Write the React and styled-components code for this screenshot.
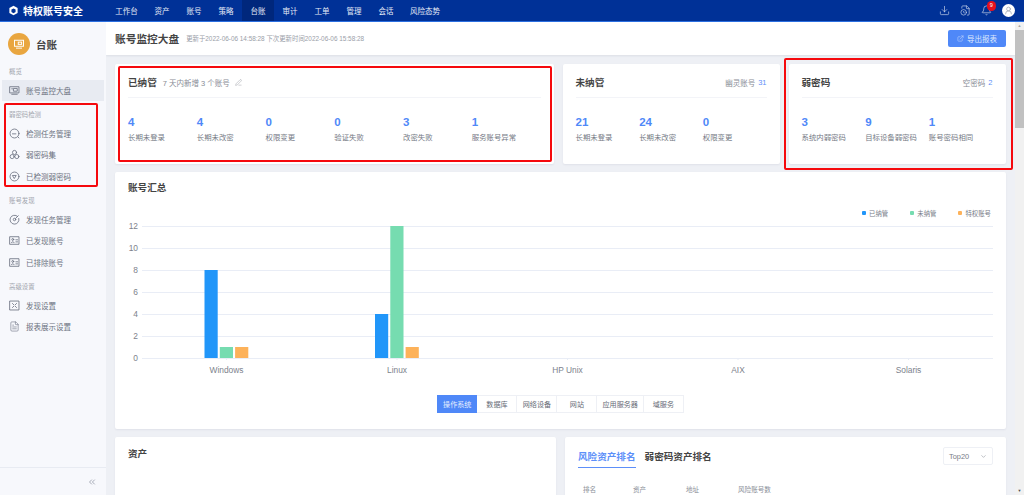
import styled, { createGlobalStyle } from 'styled-components';
import { Download, FileClock, Bell, UserRound, PenLine, FileText, ExternalLink, ChevronsLeft, ChevronDown } from 'lucide-react';

const GlobalStyle = createGlobalStyle`
  html, body {
    margin: 0;
    padding: 0;
    height: 495px;
    overflow: hidden;
    background: #eef0f5;
    font-family: "Liberation Sans", "Noto Sans CJK SC", sans-serif;
    color: #333;
  }
  * { box-sizing: border-box; }
`;

const Page = styled.div`
  width: 1024px;
  height: 495px;
  display: flex;
  flex-direction: column;
  overflow: hidden;
`;

const TopBar = styled.header`
  height: 22px;
  flex: none;
  display: flex;
  align-items: stretch;
  background: #003197;
  border-bottom: 1px solid #2b6fe0;
  color: #e4eaf6;
`;
const Brand = styled.div`
  width: 107px;
  display: flex;
  align-items: center;
  gap: 4px;
  padding-left: 8px;
  font-size: 10px;
  font-weight: 700;
  color: #fff;
`;
const Nav = styled.nav`
  display: flex;
  flex: 1;
`;
const NavItem = styled.div`
  display: flex;
  align-items: center;
  justify-content: center;
  padding: 0 8px;
  width: ${({ $w }) => $w || 32}px;
  font-size: 7.5px;
  margin-bottom: -1px;
  background: ${({ $active }) => ($active ? '#00277c' : 'transparent')};
  border-bottom: 1px solid ${({ $active }) => ($active ? '#2b6fe0' : 'transparent')};
`;
const TopIcons = styled.div`
  display: flex;
  align-items: center;
  gap: 10px;
  padding-right: 9px;
`;
const BellWrap = styled.div`
  position: relative;
  display: flex;
`;
const Badge = styled.span`
  position: absolute;
  top: -4px;
  right: -4px;
  width: 9.5px;
  height: 9.5px;
  border-radius: 50%;
  background: #e5101e;
  color: #fff;
  font-size: 5.5px;
  line-height: 9.5px;
  text-align: center;
`;
const Avatar = styled.div`
  width: 13px;
  height: 13px;
  border-radius: 50%;
  background: #fff;
  color: #8b93a3;
  display: flex;
  align-items: center;
  justify-content: center;
`;

const Body = styled.div`
  flex: 1;
  display: flex;
  min-height: 0;
`;

const Sidebar = styled.aside`
  width: 106px;
  flex: none;
  display: flex;
  flex-direction: column;
  background: #f7f8fc;
`;
const SideHead = styled.div`
  display: flex;
  align-items: center;
  gap: 6px;
  padding: 11px 0 0 8px;
  font-size: 10.5px;
  font-weight: 700;
  color: #444;
`;
const SideLogo = styled.div`
  width: 22px;
  height: 22px;
  border-radius: 50%;
  background: #e9a640;
  display: flex;
  align-items: center;
  justify-content: center;
`;
const SideMenu = styled.div`
  flex: 1;
  display: flex;
  flex-direction: column;
  gap: 8.5px;
  padding-top: 11.5px;
`;
const SideGroup = styled.div`
  position: relative;
  &::after {
    content: ${({ $marked }) => ($marked ? '""' : 'none')};
    position: absolute;
    top: -7px;
    bottom: 0;
    left: 4px;
    right: 8px;
    border: 2px solid #f5090d;
    border-radius: 2px;
  }
`;
const SideLabel = styled.div`
  height: 10px;
  line-height: 10px;
  margin-bottom: 3px;
  padding-left: 9px;
  font-size: 6.4px;
  color: #a2a6ae;
`;
const SideItem = styled.div`
  height: 21.5px;
  margin: 0 2px;
  padding-left: 7px;
  display: flex;
  align-items: center;
  gap: 6px;
  font-size: 7.5px;
  color: #6c7280;
  background: ${({ $active }) => ($active ? '#e8ebf2' : 'transparent')};
`;
const SideFoot = styled.div`
  height: 28px;
  border-top: 1px solid #e8ebf2;
  display: flex;
  align-items: center;
  justify-content: flex-end;
  padding-right: 9px;
  color: #6d7484;
`;

const Main = styled.main`
  flex: 1;
  min-width: 0;
  display: flex;
  flex-direction: column;
  overflow: hidden;
`;
const PageHead = styled.div`
  height: 33px;
  flex: none;
  display: flex;
  align-items: center;
  padding: 0 9px;
  background: #fff;
  box-shadow: 0 1px 2px rgba(60, 70, 100, 0.1);
`;
const PageTitle = styled.h1`
  margin: 0;
  font-size: 10.7px;
  font-weight: 700;
  color: #444;
`;
const PageSub = styled.span`
  margin-left: 7px;
  font-size: 6.4px;
  color: #9a9ea8;
`;
const ExportButton = styled.div`
  margin-left: auto;
  width: 58px;
  height: 17px;
  display: flex;
  align-items: center;
  justify-content: center;
  gap: 3px;
  border-radius: 2px;
  background: #4f88f8;
  color: #dfe9fd;
  font-size: 7.5px;
`;

const Content = styled.div`
  padding: 9px 9px 0;
  display: flex;
  flex-direction: column;
  gap: 8px;
`;
const TopRow = styled.div`
  display: grid;
  grid-template-columns: 438.5px 217px 217px;
  gap: 9px;
`;
const Card = styled.section`
  position: relative;
  background: #fff;
  border-radius: 2px;
  box-shadow: 0 1px 2px rgba(60, 70, 100, 0.08);
  padding: 8px 13px 0;
`;
const StatCard = styled(Card)`
  height: 100px;
  padding: 9px 13px;
  &::after {
    content: ${({ $box }) => ($box ? '""' : 'none')};
    position: absolute;
    inset: ${({ $box }) => $box};
    border: 2px solid #f5090d;
    border-radius: 2px;
  }
`;
const StatHead = styled.div`
  height: 25px;
  display: flex;
  align-items: center;
  border-bottom: 1px solid #f3f4f8;
  padding-bottom: 6px;
`;
const CardTitle = styled.h2`
  margin: 0;
  font-size: 9.6px;
  font-weight: 700;
  color: #444;
`;
const HeadNote = styled.span`
  margin-left: ${({ $right }) => ($right ? 'auto' : '6px')};
  display: flex;
  align-items: center;
  gap: 3px;
  font-size: 7.5px;
  color: #888c96;
`;
const HeadCount = styled.b`
  font-weight: 400;
  color: #5d8ff9;
`;
const PenMark = styled.span`
  margin-left: 5px;
  display: flex;
  color: #8a8e98;
`;
const StatGrid = styled.div`
  margin-top: 17px;
  display: grid;
  grid-template-columns: repeat(${({ $cols }) => $cols}, 1fr);
`;
const StatValue = styled.div`
  font-size: 11.5px;
  line-height: 14px;
  font-weight: 700;
  color: #4f88f8;
`;
const StatLabel = styled.div`
  margin-top: 4px;
  font-size: 7.4px;
  line-height: 10px;
  color: #747984;
`;

const Legend = styled.div`
  margin-top: 14px;
  height: 10px;
  display: flex;
  justify-content: flex-end;
  gap: 22px;
  padding-right: 2px;
`;
const LegendItem = styled.span`
  display: flex;
  align-items: center;
  gap: 3px;
  font-size: 6.4px;
  color: #777c87;
  &::before {
    content: '';
    width: 4px;
    height: 4px;
    border-radius: 1px;
    background: ${({ $color }) => $color};
  }
`;
const ChartSvg = styled.svg`
  display: block;
`;
const SwitchRow = styled.div`
  display: flex;
  justify-content: center;
  padding-bottom: 16px;
`;
const SwitchTab = styled.div`
  min-width: 40px;
  height: 18px;
  padding: 0 5px;
  display: flex;
  align-items: center;
  justify-content: center;
  font-size: 7.1px;
  border: 1px solid ${({ $active }) => ($active ? '#4f88f8' : '#eef0f5')};
  border-left-width: ${({ $active }) => ($active ? 1 : 0)}px;
  background: ${({ $active }) => ($active ? '#4f88f8' : '#fff')};
  color: ${({ $active }) => ($active ? '#e6eefe' : '#666b76')};
`;

const BottomRow = styled.div`
  display: grid;
  grid-template-columns: 441px 441px;
  gap: 9px;
`;
const LowerCard = styled(Card)`
  height: 90px;
  padding: ${({ $top }) => $top}px 13px 0;
`;
const RankHead = styled.div`
  display: flex;
  align-items: flex-start;
  gap: 9px;
`;
const RankTab = styled.div`
  height: 21px;
  padding-top: 2px;
  font-size: 9.6px;
  font-weight: 700;
  color: ${({ $active }) => ($active ? '#5d8ff9' : '#444')};
  border-bottom: 1px solid ${({ $active }) => ($active ? '#5d8ff9' : 'transparent')};
`;
const TopSelect = styled.div`
  margin-left: auto;
  width: 50px;
  height: 18px;
  padding: 0 5px;
  display: flex;
  align-items: center;
  justify-content: space-between;
  border: 1px solid #eef0f5;
  border-radius: 2px;
  font-size: 7.4px;
  color: #777c87;
`;
const RankColumns = styled.div`
  margin-top: 16px;
  padding-left: 5px;
  display: grid;
  grid-template-columns: 50px 53px 52px auto;
  justify-content: start;
  font-size: 6.6px;
  color: #8b8f99;
`;

const ScrollTrack = styled.div`
  width: 9px;
  flex: none;
  display: flex;
  flex-direction: column;
  align-items: center;
  background: #f1f1f1;
  color: #505050;
`;
const ScrollUp = styled.span`
  height: 8px;
  font-size: 4px;
  line-height: 8px;
  color: #a3a3a3;
`;
const ScrollThumb = styled.div`
  width: 100%;
  height: 98px;
  background: #c1c1c1;
`;
const ScrollDown = styled.span`
  margin-top: auto;
  height: 8px;
  font-size: 4px;
  line-height: 8px;
`;

const Glyph = ({ children }) => (
  <svg width="11" height="11" viewBox="0 0 16 16" fill="none" stroke="#6a7080" strokeWidth="1.2" strokeLinecap="round" strokeLinejoin="round">
    {children}
  </svg>
);

const icons = {
  board: <Glyph><rect x="1.5" y="2.5" width="13" height="9" /><rect x="7" y="5" width="5" height="4" /><path d="M4 13.5h8M4 5.5h1" /></Glyph>,
  task: <Glyph><circle cx="8" cy="8" r="6.5" /><path d="M5 8.5h5M13 13l1.5 1.5" /></Glyph>,
  set: <Glyph><circle cx="8" cy="5" r="3" /><circle cx="4.6" cy="11" r="3" /><circle cx="11.4" cy="11" r="3" /></Glyph>,
  found: <Glyph><circle cx="8" cy="8" r="6.5" /><path d="M5.5 6.5h5L8 10.5z" /></Glyph>,
  target: <Glyph><path d="M12.5 3.5a6.5 6.5 0 1 0 1.8 3" /><circle cx="8" cy="8" r="1.8" /><path d="M9.5 6.5l4-4" /></Glyph>,
  account: <Glyph><rect x="1.5" y="2.5" width="13" height="11" /><circle cx="5.5" cy="6.5" r="1.4" /><path d="M3.5 11c.4-1.6 3.6-1.6 4 0M10 7h2.5M10 10h2.5" /></Glyph>,
  scan: <Glyph><rect x="1.5" y="1.5" width="13" height="13" /><path d="M5 5l2 2M11 5L9 7M5 11l2-2M11 11L9 9" /></Glyph>,
};

const navItems = [
  { name: '工作台', w: 39 }, { name: '资产' }, { name: '账号' }, { name: '策略' }, { name: '台账', active: true },
  { name: '审计' }, { name: '工单' }, { name: '管理' }, { name: '会话' }, { name: '风险态势', w: 46 },
];

const sideGroups = [
  { label: '概览', items: [{ name: '账号监控大盘', icon: icons.board, active: true }] },
  {
    label: '弱密码检测',
    marked: true,
    items: [
      { name: '检测任务管理', icon: icons.task },
      { name: '弱密码集', icon: icons.set },
      { name: '已检测弱密码', icon: icons.found },
    ],
  },
  {
    label: '账号发现',
    items: [
      { name: '发现任务管理', icon: icons.target },
      { name: '已发现账号', icon: icons.account },
      { name: '已排除账号', icon: icons.account },
    ],
  },
  {
    label: '高级设置',
    items: [
      { name: '发现设置', icon: icons.scan },
      { name: '报表展示设置', icon: <FileText size={11} color="#6a7080" strokeWidth={1.3} /> },
    ],
  },
];

const managed = [[4, '长期未登录'], [4, '长期未改密'], [0, '权限变更'], [0, '验证失败'], [3, '改密失败'], [1, '服务账号异常']];
const unmanaged = [[21, '长期未登录'], [24, '长期未改密'], [0, '权限变更']];
const weak = [[3, '系统内弱密码'], [9, '目标设备弱密码'], [1, '账号密码相同']];

const COLORS = ['#2196f9', '#76dcb0', '#fdb25a'];
const chartData = [
  { name: 'Windows', cx: 98.5, values: [8, 1, 1] },
  { name: 'Linux', cx: 269, values: [4, 12, 1] },
  { name: 'HP Unix', cx: 439.5, values: [] },
  { name: 'AIX', cx: 610, values: [] },
  { name: 'Solaris', cx: 780.5, values: [] },
];
// value 0 sits 140px down the svg, 11px per unit
const y0 = 140;
const unit = 11;

function Chart() {
  return (
    <ChartSvg width="865" height="177" viewBox="0 0 865 177">
      {[0, 2, 4, 6, 8, 10, 12].map((v) => (
        <g key={v}>
          <line x1="14" x2="865" y1={y0 - v * unit + 0.5} y2={y0 - v * unit + 0.5} stroke="#e9edf6" />
          <text x="10" y={y0 - v * unit + 3} textAnchor="end" fontSize="8.4" fill="#7d828c">{v}</text>
        </g>
      ))}
      {chartData.map((c) => (
        <g key={c.name}>
          <line x1={c.cx} x2={c.cx} y1={y0} y2={y0 + 2} stroke="#e9edf6" />
          <text x={c.cx} y={y0 + 15} textAnchor="middle" fontSize="8.4" fill="#7d828c">{c.name}</text>
          {c.values.map((v, i) => (
            <rect key={i} x={c.cx - 22 + i * 15.3} y={y0 - v * unit} width="13.2" height={v * unit} fill={COLORS[i]} />
          ))}
        </g>
      ))}
    </ChartSvg>
  );
}

function Stats({ items }) {
  return (
    <StatGrid $cols={items.length}>
      {items.map(([value, label]) => (
        <div key={label}>
          <StatValue>{value}</StatValue>
          <StatLabel>{label}</StatLabel>
        </div>
      ))}
    </StatGrid>
  );
}

export default function App() {
  return (
    <Page>
      <GlobalStyle />
      <TopBar>
        <Brand>
          <svg width="11" height="11" viewBox="0 0 16 16" fill="none">
            <path d="M8 1l6 3.4v7.2L8 15l-6-3.4V4.4z" fill="#fff" />
            <path d="M8 5l3 1.7v3.5L8 12l-3-1.8V6.7z" fill="#003197" />
          </svg>
          特权账号安全
        </Brand>
        <Nav>
          {navItems.map((n) => (
            <NavItem key={n.name} $active={n.active} $w={n.w}>{n.name}</NavItem>
          ))}
        </Nav>
        <TopIcons>
          <Download size={11} strokeWidth={1.4} color="#d5def0" />
          <FileClock size={11} strokeWidth={1.4} color="#d5def0" />
          <BellWrap>
            <Bell size={11} strokeWidth={1.4} color="#d5def0" />
            <Badge>9</Badge>
          </BellWrap>
          <Avatar><UserRound size={9} strokeWidth={1.6} /></Avatar>
        </TopIcons>
      </TopBar>
      <Body>
        <Sidebar>
          <SideHead>
            <SideLogo>
              <svg width="12" height="12" viewBox="0 0 16 16" fill="none" stroke="#fff" strokeWidth="1.3">
                <rect x="2" y="3" width="12" height="8" />
                <rect x="7" y="5.5" width="4.5" height="3" />
                <path d="M4 13.5h8" />
              </svg>
            </SideLogo>
            台账
          </SideHead>
          <SideMenu>
            {sideGroups.map((g) => (
              <SideGroup key={g.label} $marked={g.marked}>
                <SideLabel>{g.label}</SideLabel>
                {g.items.map((it) => (
                  <SideItem key={it.name} $active={it.active}>
                    {it.icon}
                    {it.name}
                  </SideItem>
                ))}
              </SideGroup>
            ))}
          </SideMenu>
          <SideFoot><ChevronsLeft size={10} strokeWidth={1.4} /></SideFoot>
        </Sidebar>
        <Main>
          <PageHead>
            <PageTitle>账号监控大盘</PageTitle>
            <PageSub>更新于2022-06-06 14:58:28 下次更新时间2022-06-06 15:58:28</PageSub>
            <ExportButton>
              <ExternalLink size={7} strokeWidth={1.5} />
              导出报表
            </ExportButton>
          </PageHead>
          <Content>
            <TopRow>
              <StatCard $box="2px 2px 2px 3px">
                <StatHead>
                  <CardTitle>已纳管</CardTitle>
                  <HeadNote>7 天内新增 3 个账号</HeadNote>
                  <PenMark><PenLine size={7} strokeWidth={1.4} /></PenMark>
                </StatHead>
                <Stats items={managed} />
              </StatCard>
              <StatCard>
                <StatHead>
                  <CardTitle>未纳管</CardTitle>
                  <HeadNote $right>幽灵账号 <HeadCount>31</HeadCount></HeadNote>
                </StatHead>
                <Stats items={unmanaged} />
              </StatCard>
              <StatCard $box="-6px -7px -6px -5px">
                <StatHead>
                  <CardTitle>弱密码</CardTitle>
                  <HeadNote $right>空密码 <HeadCount>2</HeadCount></HeadNote>
                </StatHead>
                <Stats items={weak} />
              </StatCard>
            </TopRow>
            <Card>
              <CardTitle>账号汇总</CardTitle>
              <Legend>
                <LegendItem $color={COLORS[0]}>已纳管</LegendItem>
                <LegendItem $color={COLORS[1]}>未纳管</LegendItem>
                <LegendItem $color={COLORS[2]}>特权账号</LegendItem>
              </Legend>
              <Chart />
              <SwitchRow>
                <SwitchTab $active>操作系统</SwitchTab>
                <SwitchTab>数据库</SwitchTab>
                <SwitchTab>网络设备</SwitchTab>
                <SwitchTab>网站</SwitchTab>
                <SwitchTab>应用服务器</SwitchTab>
                <SwitchTab>域服务</SwitchTab>
              </SwitchRow>
            </Card>
            <BottomRow>
              <LowerCard $top={9}>
                <CardTitle>资产</CardTitle>
              </LowerCard>
              <LowerCard $top={10}>
                <RankHead>
                  <RankTab $active>风险资产排名</RankTab>
                  <RankTab>弱密码资产排名</RankTab>
                  <TopSelect>Top20 <ChevronDown size={7} strokeWidth={1.6} /></TopSelect>
                </RankHead>
                <RankColumns>
                  <span>排名</span>
                  <span>资产</span>
                  <span>地址</span>
                  <span>风险账号数</span>
                </RankColumns>
              </LowerCard>
            </BottomRow>
          </Content>
        </Main>
        <ScrollTrack>
          <ScrollUp>▲</ScrollUp>
          <ScrollThumb />
          <ScrollDown>▼</ScrollDown>
        </ScrollTrack>
      </Body>
    </Page>
  );
}
